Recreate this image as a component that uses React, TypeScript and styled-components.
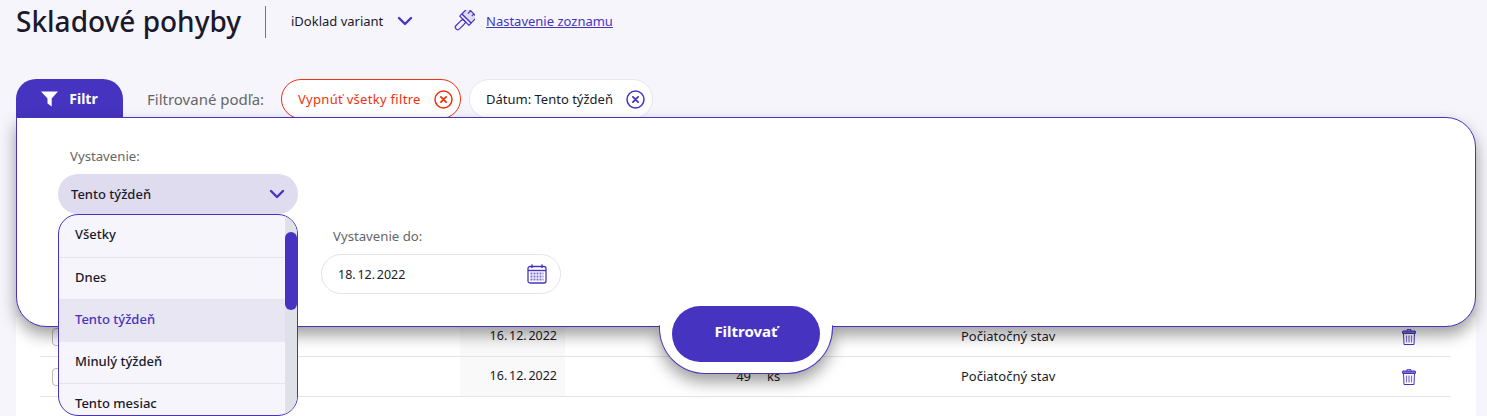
import React from "react";
import styled, { createGlobalStyle } from "styled-components";

const PURPLE = "#4634c1";
const INK = "#1a1a2b";
const FONT = `"Noto Sans", "Open Sans", sans-serif`;

const GlobalStyle = createGlobalStyle`
  html, body {
    margin: 0;
    padding: 0;
    height: 416px;
    overflow: hidden;
    background: #f6f5fb;
    font-family: ${FONT};
    color: ${INK};
  }
  * {
    box-sizing: border-box;
  }
`;

const Page = styled.div`
  width: 1487px;
  height: 416px;
  overflow: hidden;
  padding: 0 11px 0 16px;
`;

const Header = styled.header`
  display: flex;
  align-items: center;
  height: 44px;
`;

const Title = styled.h1`
  margin: 0 0 2px;
  width: 249px;
  font-size: 28px;
  font-weight: 500;
  white-space: nowrap;
`;

const Divider = styled.div`
  width: 1px;
  height: 32px;
  background: #777;
  margin-right: 25px;
`;

const Variant = styled.div`
  display: flex;
  align-items: center;
  font-size: 13px;
  width: 162px;
  gap: 14px;
  margin-bottom: 2px;
`;

const SettingsLink = styled.a`
  display: flex;
  align-items: center;
  gap: 11px;
  font-size: 13px;
  color: ${PURPLE};
  margin-bottom: 2px;
  span {
    text-decoration: underline;
  }
`;

const TabRow = styled.div`
  display: flex;
  align-items: center;
  margin-top: 35px;
  height: 39px;
`;

const FilterTab = styled.div`
  display: flex;
  align-items: center;
  justify-content: center;
  gap: 11px;
  width: 107px;
  height: 39px;
  background: ${PURPLE};
  color: #fff;
  font-size: 14px;
  font-weight: 700;
  border-radius: 20px 20px 0 0;
  margin-right: 24px;
`;

const FilterLabel = styled.span`
  width: 134px;
  font-size: 15px;
  color: #666;
  white-space: nowrap;
`;

const Chip = styled.div<{ $danger?: boolean }>`
  display: flex;
  align-items: center;
  justify-content: space-between;
  height: 40px;
  padding: 0 7px 0 16px;
  margin-right: 8px;
  align-self: flex-start;
  font-size: 13px;
  letter-spacing: ${(p) => (p.$danger ? "0.3px" : "0")};
  white-space: nowrap;
  border-radius: 20px;
  background: #fff;
  border: 1px solid ${(p) => (p.$danger ? "#f0320f" : "#e6e6ec")};
  color: ${(p) => (p.$danger ? "#f0320f" : INK)};
  width: ${(p) => (p.$danger ? "180px" : "184px")};
`;

const Panel = styled.section`
  position: relative;
  z-index: 2;
  height: 210px;
  margin-top: -1px;
  padding: 28px 0 0 41px;
  background: #fff;
  border: 1px solid ${PURPLE};
  border-radius: 0 30px 30px 30px;
  box-shadow: 0 8px 16px rgba(0, 0, 0, 0.38);
`;

const FormGrid = styled.div`
  display: grid;
  grid-template-columns: 240px 240px;
  column-gap: 23px;
  row-gap: 12px;
`;

const Field = styled.div<{ $column?: number; $row?: number }>`
  position: relative;
  grid-column: ${(p) => p.$column ?? 1};
  grid-row: ${(p) => p.$row ?? 1};
`;

const FieldLabel = styled.label`
  display: block;
  height: 20px;
  line-height: 20px;
  padding-left: 12px;
  margin-bottom: 8px;
  font-size: 13.2px;
  color: #666;
`;

const Select = styled.div`
  display: flex;
  align-items: center;
  justify-content: space-between;
  height: 40px;
  padding: 0 13px;
  font-size: 13px;
  font-weight: 500;
  background: #dfdcf0;
  border-radius: 20px;
`;

const DropdownMenu = styled.div`
  position: absolute;
  z-index: 5;
  top: 68px;
  left: 0;
  width: 240px;
  height: 202px;
  display: flex;
  overflow: hidden;
  background: #f6f5fb;
  border: 1px solid ${PURPLE};
  border-radius: 20px;
`;

const OptionList = styled.div`
  flex: 1;
`;

const Option = styled.div<{ $active?: boolean }>`
  display: flex;
  align-items: center;
  height: 42px;
  padding: 0 16px 4px;
  font-size: 13px;
  font-weight: 500;
  color: ${(p) => (p.$active ? PURPLE : INK)};
  background: ${(p) => (p.$active ? "#e7e6f2" : "transparent")};
  border-bottom: 1px solid ${(p) => (p.$active ? "transparent" : "#e4e4ec")};
  &:first-child {
    height: 43px;
    padding-bottom: 5px;
  }
`;

const ScrollTrack = styled.div`
  width: 12px;
  padding-top: 17px;
  background: #dfe1e8;
`;

const ScrollThumb = styled.div`
  height: 78px;
  background: ${PURPLE};
  border-radius: 6px;
`;

const DateInput = styled.div`
  display: flex;
  align-items: center;
  justify-content: space-between;
  width: 240px;
  height: 40px;
  padding: 0 13px 0 16px;
  font-size: 12.5px;
  word-spacing: -1.5px;
  background: #fff;
  border: 1px solid #e4e4e8;
  border-radius: 20px;
`;

const ButtonNotch = styled.div`
  position: absolute;
  top: calc(100% - 1px);
  left: 50%;
  transform: translateX(-50%);
  width: 174px;
  height: 49px;
  background: #fff;
  border: 1px solid ${PURPLE};
  border-top: 1px solid #fff;
  border-radius: 0 0 46px 46px;
  box-shadow: 0 8px 16px rgba(0, 0, 0, 0.38);
  clip-path: inset(0 -40px -40px -40px);
`;

const ApplyButton = styled.button`
  position: absolute;
  top: calc(100% - 20px);
  left: 50%;
  transform: translateX(-50%);
  width: 148px;
  height: 56px;
  border: none;
  border-radius: 28px;
  background: ${PURPLE};
  color: #fff;
  font-family: ${FONT};
  font-size: 15px;
  font-weight: 700;
  padding: 0 0 7px;
`;

const Table = styled.div`
  position: relative;
  z-index: 1;
  margin-top: -10px;
  height: 100px;
  padding: 0 25px 0 24px;
  background: #fff;
`;

const Row = styled.div`
  display: grid;
  grid-template-columns: 420px 105px 187px 209px 1fr 49px;
  height: 40px;
  font-size: 13px;
  border-bottom: 1px solid #e4e4e8;
`;

const Cell = styled.div`
  display: flex;
  align-items: center;
`;

const TextCell = styled(Cell)`
  padding-bottom: 2px;
`;

const CheckCell = styled(Cell)`
  padding-left: 12px;
`;

const Checkbox = styled.span`
  width: 18px;
  height: 18px;
  border: 1px solid #bbb;
  border-radius: 4px;
  background: #fff;
`;

const DateCell = styled(TextCell)`
  justify-content: flex-end;
  padding-right: 8px;
  font-size: 12.5px;
  word-spacing: -1.5px;
  background: #f9f9f9;
`;

const QtyCell = styled(TextCell)`
  justify-content: flex-end;
  padding-right: 1px;
`;

const UnitCell = styled(TextCell)`
  padding-left: 15px;
`;

const Chevron = () => (
  <svg width="16" height="16" viewBox="0 0 16 16" fill="none">
    <path d="M2 5l6 6 6-6" stroke={PURPLE} strokeWidth="2.4" strokeLinecap="round" strokeLinejoin="round" />
  </svg>
);

const BrushIcon = () => (
  <svg width="22" height="22" viewBox="0 0 22 22" fill="none" stroke={PURPLE} strokeWidth="1.2" strokeLinejoin="round">
    <g transform="rotate(45 11 11)">
      <rect x="4.5" y="-1" width="13" height="8.5" rx="0.6" fill="#dfdcf0" />
      <path d="M8.5 -1v4M13 -1v3" />
      <rect x="4.5" y="7.5" width="13" height="3" />
      <path d="M9 10.5h4l.4 3v6.3a2.4 2.4 0 0 1-4.8 0v-6.3z" />
    </g>
  </svg>
);

const FunnelIcon = () => (
  <svg width="17" height="16" viewBox="0 0 17 16" fill="#fff">
    <path d="M0 0.5h17l-6.3 7v8l-4.2-3v-5z" />
  </svg>
);

const CloseCircle = ({ color }: { color: string }) => (
  <svg width="19" height="19" viewBox="0 0 19 19" fill="none" stroke={color}>
    <circle cx="9.5" cy="9.5" r="8.5" strokeWidth="1.5" />
    <path d="M6.9 6.9l5.2 5.2M12.1 6.9l-5.2 5.2" strokeWidth="1.8" strokeLinecap="round" />
  </svg>
);

const CalendarIcon = () => (
  <svg width="20" height="20" viewBox="0 0 20 20" fill="none" stroke={PURPLE}>
    <rect x="1" y="2.5" width="18" height="16.5" rx="2" strokeWidth="1.3" />
    <path d="M1 6.5h18" strokeWidth="1.4" />
    <path d="M5 0.5v3.5M15 0.5v3.5" strokeWidth="1.5" />
    <path d="M3.5 9.5h13M3.5 12.5h13M3.5 15.5h13" strokeWidth="2" strokeDasharray="2 1" opacity="0.7" />
  </svg>
);

const TrashIcon = () => (
  <svg width="14" height="16" viewBox="0 0 14 16" fill="none" stroke={PURPLE} strokeWidth="1">
    <path d="M5 2V0.7h4V2" />
    <rect x="0.5" y="2" width="13" height="2.5" rx="0.5" fill="#7a6fd0" />
    <path d="M1.5 4.5l.5 11h10l.5-11" />
    <path d="M4.5 6.5v7M7 6.5v7M9.5 6.5v7" strokeWidth="1.2" opacity="0.7" />
  </svg>
);

const options = ["Všetky", "Dnes", "Tento týždeň", "Minulý týždeň", "Tento mesiac"];

export default function App() {
  return (
    <Page>
      <GlobalStyle />
      <Header>
        <Title>Skladové pohyby</Title>
        <Divider />
        <Variant>
          iDoklad variant
          <Chevron />
        </Variant>
        <SettingsLink>
          <BrushIcon />
          <span>Nastavenie zoznamu</span>
        </SettingsLink>
      </Header>
      <TabRow>
        <FilterTab>
          <FunnelIcon />
          Filtr
        </FilterTab>
        <FilterLabel>Filtrované podľa:</FilterLabel>
        <Chip $danger>
          Vypnúť všetky filtre
          <CloseCircle color="#f0320f" />
        </Chip>
        <Chip>
          Dátum: Tento týždeň
          <CloseCircle color={PURPLE} />
        </Chip>
      </TabRow>
      <Panel>
        <FormGrid>
          <Field>
            <FieldLabel>Vystavenie:</FieldLabel>
            <Select>
              Tento týždeň
              <Chevron />
            </Select>
            <DropdownMenu>
              <OptionList>
                {options.map((o) => (
                  <Option key={o} $active={o === "Tento týždeň"}>
                    {o}
                  </Option>
                ))}
              </OptionList>
              <ScrollTrack>
                <ScrollThumb />
              </ScrollTrack>
            </DropdownMenu>
          </Field>
          <Field $column={2} $row={2}>
            <FieldLabel>Vystavenie do:</FieldLabel>
            <DateInput>
              18. 12. 2022
              <CalendarIcon />
            </DateInput>
          </Field>
        </FormGrid>
        <ButtonNotch />
        <ApplyButton>Filtrovať</ApplyButton>
      </Panel>
      <Table>
        {[1, 2].map((n) => (
          <Row key={n}>
            <CheckCell>
              <Checkbox />
            </CheckCell>
            <DateCell>16. 12. 2022</DateCell>
            <QtyCell>49</QtyCell>
            <UnitCell>ks</UnitCell>
            <TextCell>Počiatočný stav</TextCell>
            <Cell>
              <TrashIcon />
            </Cell>
          </Row>
        ))}
      </Table>
    </Page>
  );
}
